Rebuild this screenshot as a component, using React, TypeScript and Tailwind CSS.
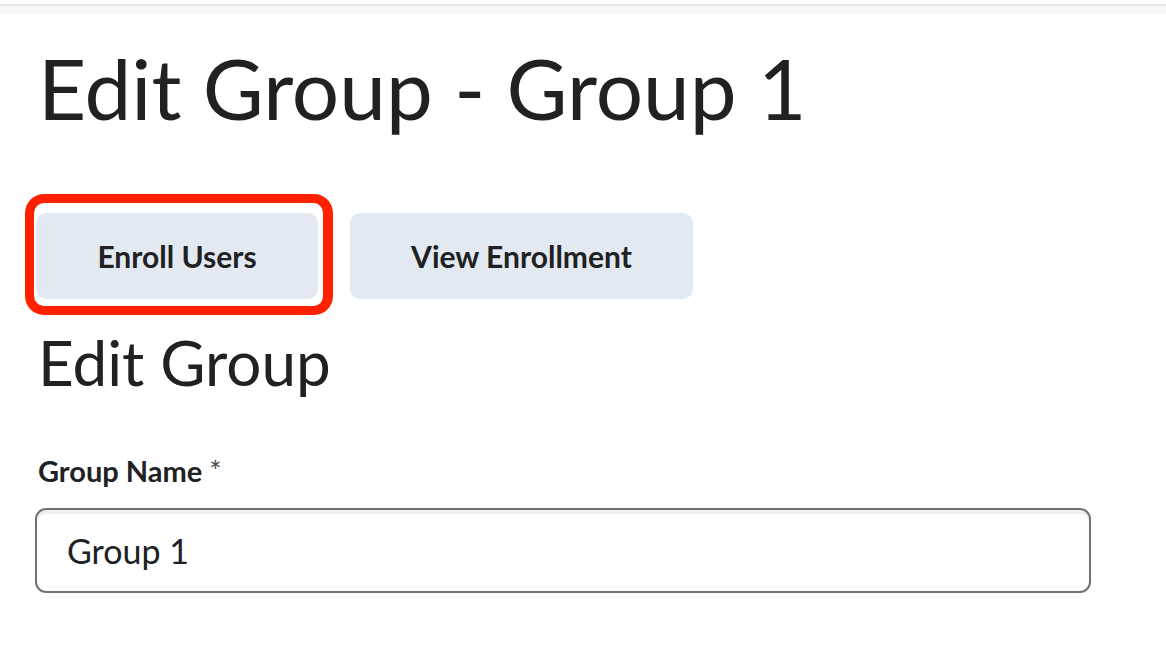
import React from "react";

export default function App() {
  return (
    <div className="w-[1166px] h-[656px] bg-white overflow-hidden text-[#202122]" style={{ fontFamily: "Lato, 'Noto Sans', sans-serif" }}>
      <div className="h-[4px] bg-white" />
      <div className="h-[2px] bg-[#e3e5e9]" />
      <div className="h-[9px] bg-[#f9f9fa]" />
      <div className="pl-[38px]">
        <h1 className="text-[83.6px] leading-[84px] font-normal mt-[31px]">Edit Group - Group 1</h1>
        <div className="flex items-start gap-[17px] mt-[64px] ml-[-13px]">
          <div className="rounded-[19px] border-[9px] border-r-[10px] border-[#ff2000] pt-[10px] pl-[2px] pr-[5px] pb-[7px]">
            <button className="block w-[282px] h-[86px] rounded-[10px] bg-[#e3e9f1] text-[30px] font-bold">Enroll Users</button>
          </div>
          <button className="mt-[19px] w-[343px] h-[86px] rounded-[10px] bg-[#e3e9f1] text-[30px] font-bold">View Enrollment</button>
        </div>
        <h2 className="text-[62px] leading-[62px] font-normal mt-[16px]">Edit Group</h2>
        <div className="mt-[62px] text-[29px] font-bold leading-[31px]">Group Name <span className="font-normal text-[#494c4e]">*</span></div>
        <div className="mt-[22px] w-[1056px] h-[85px] ml-[-3px] rounded-[11px] border-[2px] border-[#6e7376] shadow-[inset_0_4px_0_#eef0f3] flex items-center pl-[30px] text-[34px]">Group 1</div>
      </div>
    </div>
  );
}
